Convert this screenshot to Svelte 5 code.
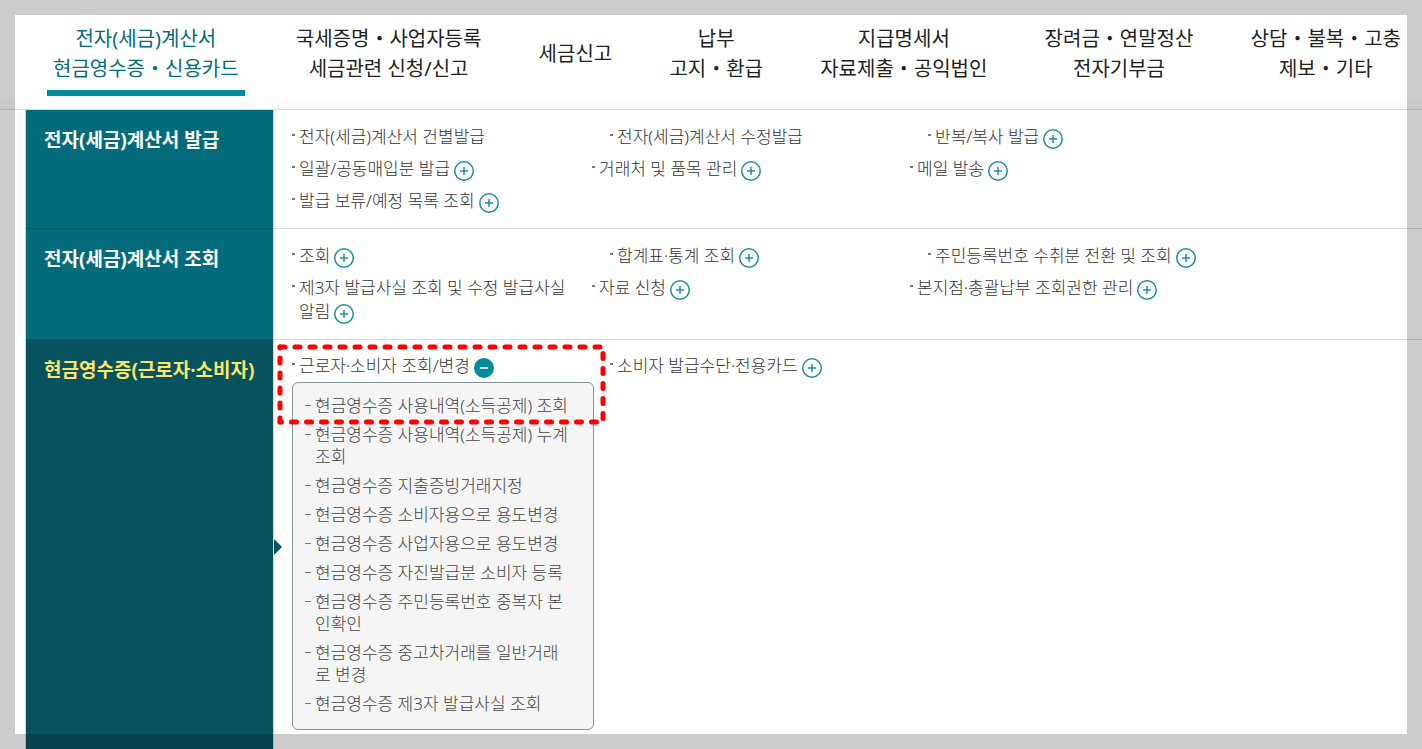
<script lang="ts">
    const tabs = [
        ["전자(세금)계산서", "현금영수증・신용카드"],
        ["국세증명・사업자등록", "세금관련 신청/신고"],
        ["세금신고"],
        ["납부", "고지・환급"],
        ["지급명세서", "자료제출・공익법인"],
        ["장려금・연말정산", "전자기부금"],
        ["상담・불복・고충", "제보・기타"],
    ];

    let activeTab = $state(0);

    type Item = { label: string; more?: boolean; marked?: boolean; sub?: string[] };

    const groups: { title: string; items: Item[] }[] = [
        {
            title: "전자(세금)계산서 발급",
            items: [
                { label: "전자(세금)계산서 건별발급" },
                { label: "전자(세금)계산서 수정발급" },
                { label: "반복/복사 발급", more: true },
                { label: "일괄/공동매입분 발급", more: true },
                { label: "거래처 및 품목 관리", more: true },
                { label: "메일 발송", more: true },
                { label: "발급 보류/예정 목록 조회", more: true },
            ],
        },
        {
            title: "전자(세금)계산서 조회",
            items: [
                { label: "조회", more: true },
                { label: "합계표·통계 조회", more: true },
                { label: "주민등록번호 수취분 전환 및 조회", more: true },
                { label: "제3자 발급사실 조회 및 수정 발급사실 알림", more: true },
                { label: "자료 신청", more: true },
                { label: "본지점·총괄납부 조회권한 관리", more: true },
            ],
        },
        {
            title: "현금영수증(근로자·소비자)",
            items: [
                {
                    label: "근로자·소비자 조회/변경",
                    more: true,
                    marked: true,
                    sub: [
                        "현금영수증 사용내역(소득공제) 조회",
                        "현금영수증 사용내역(소득공제) 누계 조회",
                        "현금영수증 지출증빙거래지정",
                        "현금영수증 소비자용으로 용도변경",
                        "현금영수증 사업자용으로 용도변경",
                        "현금영수증 자진발급분 소비자 등록",
                        "현금영수증 주민등록번호 중복자 본인확인",
                        "현금영수증 중고차거래를 일반거래로 변경",
                        "현금영수증 제3자 발급사실 조회",
                    ],
                },
                { label: "소비자 발급수단·전용카드", more: true },
            ],
        },
    ];

    const activeGroup = 2;
</script>

<div class="page">
    <nav class="tabs">
        {#each tabs as lines, i}
            <a href="#menu" class="tab" class:active={i === activeTab} onclick={() => (activeTab = i)}>
                {#each lines as line}
                    <span>{line}</span>
                {/each}
            </a>
        {/each}
    </nav>

    {#each groups as group, g}
        <section class="group" class:active={g === activeGroup}>
            <h2>{group.title}</h2>
            <ul class="items">
                {#each group.items as item}
                    <li>
                        <a href="#item">{item.label}</a>{#if item.more}<button
                                class="toggle"
                                class:open={item.sub}
                                aria-label={item.label}
                                aria-expanded={!!item.sub}
                            >
                                <svg width="20" height="20" viewBox="0 0 20 20">
                                    <circle cx="10" cy="10" r="9.25" />
                                    <path d={item.sub ? "M6 10h8" : "M6 10h8M10 6v8"} />
                                </svg>
                            </button>{/if}
                        {#if item.sub}
                            <ul class="sub">
                                {#each item.sub as label}
                                    <li><a href="#sub">{label}</a></li>
                                {/each}
                            </ul>
                        {/if}
                        {#if item.marked}
                            <svg class="mark" width="330" height="82" viewBox="0 0 330 82">
                                <path d="M3 3H326" />
                                <path d="M3 3V78" stroke-dashoffset="4" />
                                <path d="M326 3V78" stroke-dashoffset="8.5" />
                                <path d="M3 78H326" stroke-dashoffset="3.5" />
                            </svg>
                        {/if}
                    </li>
                {/each}
            </ul>
        </section>
    {/each}

    <div class="frame"></div>
</div>

<style>
    :global(body) {
        margin: 0;
        background: #fff;
    }

    .page {
        position: relative;
        height: 100vh;
        overflow: hidden;
        font-family: "Noto Sans", "Noto Sans CJK KR", sans-serif;
        font-size: 17px;
        color: #333;
    }

    a {
        color: inherit;
        text-decoration: none;
    }

    ul {
        list-style: none;
        margin: 0;
        padding: 0;
    }

    .tabs {
        display: flex;
        justify-content: space-between;
        box-sizing: border-box;
        height: 110px;
        padding: 18px 15px 13px 47px;
        border-bottom: 1px solid #d9dcdc;
        background: linear-gradient(#fff 98px, #fafafa);
    }

    .tab {
        display: flex;
        flex-direction: column;
        justify-content: center;
        padding: 0 6px;
        border-bottom: 6px solid transparent;
        color: #222;
        font-size: 20px;
        font-weight: 400;
        line-height: 30px;
        text-align: center;
        white-space: nowrap;
    }

    .tab.active {
        color: #046d7b;
        border-color: #008c99;
    }

    .group {
        display: flex;
        margin-left: 25px;
    }

    h2 {
        position: relative;
        flex: none;
        box-sizing: border-box;
        width: 249px;
        margin: 0;
        padding: 17px 0 0 18px;
        border: solid #d0dcde;
        border-width: 0 1px;
        background: #036b79;
        box-shadow: inset 0 -1px #035a66;
        color: #fff;
        font-size: 19px;
        font-weight: 700;
        line-height: 26px;
    }

    .group.active h2 {
        background: #06535f;
        box-shadow: none;
        color: #ffe566;
    }

    .group.active h2::after {
        content: "";
        position: absolute;
        top: 50%;
        left: 100%;
        margin: -8px 0 0 1px;
        border: 8px solid transparent;
        border-left-color: #06535f;
        border-right: 0;
    }

    .items {
        flex: 1;
        display: flex;
        flex-wrap: wrap;
        align-content: flex-start;
        gap: 8px 0;
        padding: 15px 175px 15px 18px;
        border-bottom: 1px solid #d9dcdc;
        font-weight: 300;
        line-height: 24px;
    }

    .group.active .items {
        padding: 14px 175px 23px 18px;
    }

    .items > li {
        position: relative;
        box-sizing: border-box;
        width: 318px;
        padding: 0 30px 0 7px;
    }

    .items > li:nth-child(3n + 1):not(:first-child) {
        width: 300px;
        padding-right: 12px;
    }

    .items > li::before {
        content: "";
        position: absolute;
        top: 9px;
        left: 0;
        width: 3px;
        height: 2px;
        background: #777;
    }

    .toggle {
        width: 20px;
        height: 20px;
        margin: -2px 0 -2px 4px;
        padding: 0;
        border: 0;
        background: none;
        vertical-align: -6px;
        line-height: 0;
        cursor: pointer;
    }

    .toggle svg {
        display: block;
        fill: none;
        stroke: #1e8f9b;
        stroke-width: 1.5;
    }

    .toggle.open circle {
        fill: #008c99;
        stroke: #008c99;
    }

    .toggle.open path {
        stroke: #fff;
    }

    .sub {
        display: flex;
        flex-direction: column;
        gap: 7px;
        box-sizing: border-box;
        width: 302px;
        margin: 4px 0 0 -7px;
        padding: 12px 20px 14px 12px;
        border: 1px solid #7f9798;
        border-radius: 6px;
        background: #f5f5f5;
        color: #444;
        line-height: 22px;
    }

    .sub li {
        position: relative;
        padding-left: 10px;
    }

    .sub li::before {
        content: "";
        position: absolute;
        top: 10px;
        left: 0;
        width: 6px;
        height: 1px;
        background: #777;
    }

    .mark {
        position: absolute;
        top: -10px;
        left: -15px;
        fill: none;
        stroke: #f00;
        stroke-width: 5;
        stroke-linecap: round;
        stroke-dasharray: 5 10;
        pointer-events: none;
    }

    .frame {
        position: absolute;
        inset: 0;
        border: 15px solid rgba(0, 0, 0, 0.2);
        pointer-events: none;
    }
</style>
